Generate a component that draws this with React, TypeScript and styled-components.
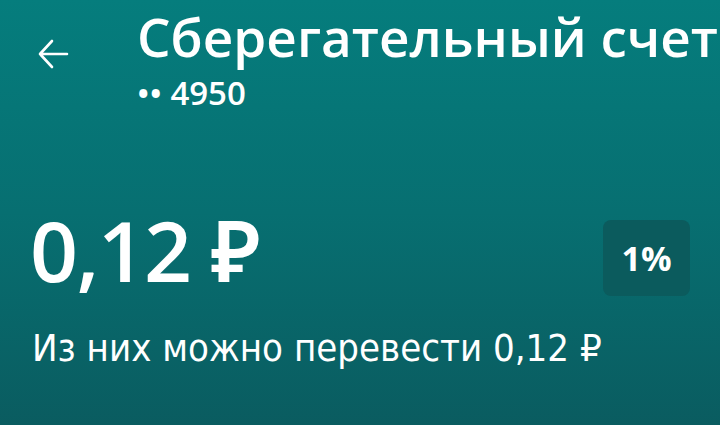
import React from "react";
import styled, { createGlobalStyle } from "styled-components";

const Global = createGlobalStyle`
  html, body { margin: 0; padding: 0; }
  body { width: 720px; height: 425px; overflow: hidden; }
`;

const Screen = styled.div`
  width: 720px;
  height: 425px;
  box-sizing: border-box;
  background: linear-gradient(180deg, #057d7d 0%, #076f71 50%, #0a5c60 100%);
  color: #ffffff;
  font-family: "Open Sans", "Noto Sans", sans-serif;
  overflow: hidden;
  display: flex;
  flex-direction: column;
`;

const Header = styled.div`
  display: flex;
  align-items: flex-start;
  padding: 0 0 0 36px;
`;

const BackButton = styled.div`
  width: 34px;
  height: 34px;
  margin-top: 37px;
  margin-right: 67px;
  display: flex;
  align-items: center;
  justify-content: center;
  flex-shrink: 0;
`;

const TitleBlock = styled.div`
  display: flex;
  flex-direction: column;
  white-space: nowrap;
  min-width: 0;
`;

const Title = styled.div`
  font-size: 53px;
  font-weight: 600;
  line-height: 74px;
  letter-spacing: 0;
`;

const Subtitle = styled.div`
  font-size: 33px;
  font-weight: 600;
  line-height: 38px;
`;

const BalanceRow = styled.div`
  display: flex;
  align-items: flex-start;
  justify-content: space-between;
  padding: 0 30px 0 30px;
  margin-top: 108px;
`;

const Amount = styled.div`
  font-size: 84px;
  font-weight: 600;
  line-height: 60px;
  letter-spacing: -1.6px;
`;

const Badge = styled.div`
  width: 87px;
  height: 76px;
  border-radius: 8px;
  background: #0b5b5d;
  display: flex;
  align-items: center;
  justify-content: center;
  font-size: 34px;
  font-weight: 700;
`;

const Caption = styled.div`
  font-family: "DejaVu Sans Condensed", "DejaVu Sans", sans-serif;
  font-size: 38px;
  line-height: 44px;
  padding-left: 32px;
  margin-top: 30px;
  white-space: nowrap;
`;

export default function App() {
  return (
    <>
      <Global />
      <Screen>
        <Header>
          <BackButton>
            <svg width="32" height="32" viewBox="0 0 32 32" fill="none">
              <path
                d="M30 16H3M15 3L3 16L15 29"
                stroke="#ffffff"
                strokeWidth="2.6"
                strokeLinecap="round"
                strokeLinejoin="round"
              />
            </svg>
          </BackButton>
          <TitleBlock>
            <Title>Сберегательный счет</Title>
            <Subtitle>•• 4950</Subtitle>
          </TitleBlock>
        </Header>
        <BalanceRow>
          <Amount>0,12 ₽</Amount>
          <Badge>1%</Badge>
        </BalanceRow>
        <Caption>Из них можно перевести 0,12 ₽</Caption>
      </Screen>
    </>
  );
}
